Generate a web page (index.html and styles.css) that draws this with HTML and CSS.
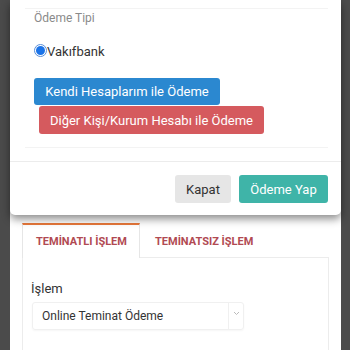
FILE: index.html
```html
<!DOCTYPE html>
<html lang="tr">
<head>
<meta charset="utf-8">
<link rel="stylesheet" href="styles.css">
</head>
<body>
<div class="page">
  <div class="tabs">
    <div class="tab active">TEMİNATLI İŞLEM</div>
    <div class="tab">TEMİNATSIZ İŞLEM</div>
    <div class="tab-fill"></div>
  </div>
  <div class="tab-content">
    <div class="field-label">İşlem</div>
    <div class="select">
      <span class="select-text">Online Teminat Ödeme</span>
      <span class="select-arrow">
        <svg width="7" height="5" viewBox="0 0 7 5"><path d="M1 1l2.5 2.5L6 1" fill="none" stroke="#bbb" stroke-width="1"/></svg>
      </span>
    </div>
  </div>
</div>

<div class="modal">
  <div class="modal-body">
    <div class="section">
      <div class="section-title">Ödeme Tipi</div>
      <label class="radio-row">
        <span class="radio"><span class="radio-dot"></span></span>
        <span class="radio-text">Vakıfbank</span>
      </label>
      <div class="btn-group">
        <button class="btn btn-blue">Kendi Hesaplarım ile Ödeme</button>
        <button class="btn btn-red">Diğer Kişi/Kurum Hesabı ile Ödeme</button>
      </div>
    </div>
  </div>
  <div class="modal-footer">
    <button class="btn btn-gray">Kapat</button>
    <button class="btn btn-teal">Ödeme Yap</button>
  </div>
</div>
</body>
</html>
```

FILE: styles.css
```css
* { box-sizing: border-box; }
html, body { margin: 0; padding: 0; }
body {
  background: #4b4b4b;
  font-family: Roboto, "Noto Sans", sans-serif;
  width: 350px;
  height: 350px;
  overflow: hidden;
  position: relative;
}
.page {
  margin: 0 9px 0 10px;
  background: #fff;
  height: 350px;
  padding: 223px 12px 0 12px;
}
.tabs {
  display: flex;
  height: 35px;
}
.tab {
  font-size: 11px;
  font-weight: 700;
  color: #b14a52;
  padding: 12px 13px 0 13px;
  white-space: nowrap;
}
.tab.active {
  border-top: 2px solid #e8783a;
  border-left: 1px solid #e6e6e6;
  border-right: 1px solid #e6e6e6;
  background: #fff;
  padding-top: 10px;
  width: 118px;
}
.tab:nth-child(2) { padding-left: 15px; border-bottom: 1px solid #ececec; }
.tab-fill {
  flex: 1;
  border-bottom: 1px solid #ececec;
}
.tab-content {
  border-left: 1px solid #ececec;
  border-right: 1px solid #ececec;
  padding: 22px 8px 0 8px;
  height: 100px;
}
.field-label {
  font-size: 13px;
  color: #333;
  line-height: 18px;
  margin-bottom: 4px;
}
.select {
  width: 212px;
  height: 28px;
  margin-left: 1px;
  border: 1px solid #f0f0f0;
  border-radius: 3px;
  display: flex;
  align-items: center;
  box-shadow: 0 1px 2px rgba(0,0,0,0.04);
}
.select-text {
  flex: 1;
  font-size: 12px;
  color: #333;
  padding-left: 9px;
  white-space: nowrap;
}
.select-arrow {
  width: 15px;
  height: 26px;
  border-left: 1px solid #f0f0f0;
  display: flex;
  justify-content: center;
  padding-top: 8px;
}

.modal {
  position: absolute;
  top: 0;
  left: 10px;
  width: 331px;
  background: #fff;
  border-radius: 0 0 5px 5px;
  box-shadow: 0 4px 9px rgba(0,0,0,0.45);
}
.modal-body {
  padding: 8px 13px 13px 15px;
}
.section {
  border-top: 1px solid #f3f3f3;
  border-bottom: 1px solid #f3f3f3;
  padding: 2px 0 13px 9px;
}
.section-title {
  font-size: 12px;
  color: #8a8a8a;
  line-height: 14px;
}
.radio-row {
  display: flex;
  align-items: center;
  margin-top: 18px;
  height: 14px;
}
.radio {
  width: 13px;
  height: 13px;
  border: 1px solid #5a8fd8;
  border-radius: 50%;
  display: flex;
  align-items: center;
  justify-content: center;
  background: #fff;
  flex: none;
}
.radio-dot {
  width: 9px;
  height: 9px;
  border-radius: 50%;
  background: #1a73e8;
}
.radio-text {
  font-size: 13px;
  color: #333;
  margin-top: 2px;
}
.btn-group {
  margin-top: 21px;
  display: flex;
  flex-direction: column;
  align-items: flex-start;
  gap: 1px;
}
.btn {
  border: none;
  font-family: Roboto, "Noto Sans", sans-serif;
  font-size: 13px;
  border-radius: 3px;
  padding: 0 12px;
  white-space: nowrap;
  cursor: pointer;
}
.btn-blue {
  background: #2b88d0;
  color: #fff;
  height: 27px;
  width: 186px;
  padding: 0;
}
.btn-red {
  background: #d55a5e;
  color: #fff;
  height: 28px;
  width: 225px;
  padding: 0;
  margin-left: 5px;
}
.modal-footer {
  border-top: 1px solid #ececec;
  padding: 13px 13px 12px 13px;
  display: flex;
  justify-content: flex-end;
  gap: 8px;
}
.btn-gray {
  background: #e6e6e6;
  color: #333;
  height: 28px;
  width: 56px;
  padding: 0;
}
.btn-teal {
  background: #3fb4a8;
  color: #fff;
  height: 28px;
  width: 89px;
  padding: 0;
}
```
